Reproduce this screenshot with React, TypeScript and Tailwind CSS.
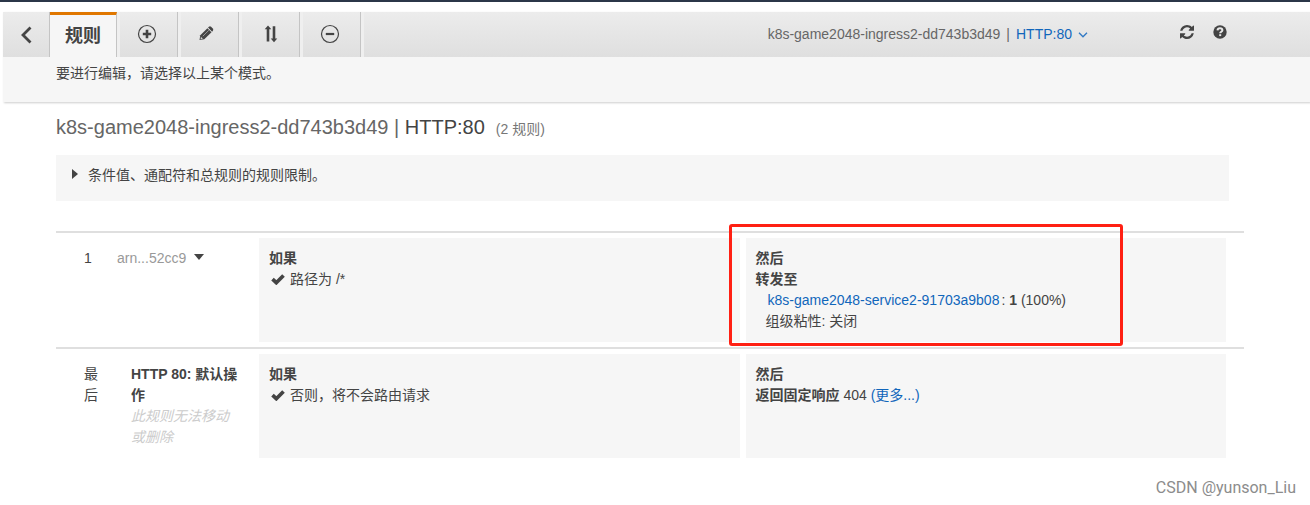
import type { ReactNode } from 'react'

const listener = 'k8s-game2048-ingress2-dd743b3d49'

function BackIcon() {
  return (
    <svg viewBox="0 0 12 18" className="h-[18px] w-3" fill="none" stroke="#444" strokeWidth="2.8">
      <path d="M10.5 1.5 3 9l7.500 7.500" />
    </svg>
  )
}

function PlusIcon() {
  return (
    <svg viewBox="0 0 20 20" className="size-5" fill="none" stroke="#444">
      <circle cx="10" cy="10" r="8.500" strokeWidth="1.200" />
      <path d="M10 5.800v8.400M5.800 10h8.400" strokeWidth="2.600" />
    </svg>
  )
}

function MinusIcon() {
  return (
    <svg viewBox="0 0 20 20" className="size-5" fill="none" stroke="#444">
      <circle cx="10" cy="10" r="8.500" strokeWidth="1.200" />
      <path d="M5.800 10h8.400" strokeWidth="2.200" />
    </svg>
  )
}

function PencilIcon() {
  return (
    <svg viewBox="0 0 20 20" className="size-5" fill="#444">
      <path d="M1.500 16 2.300 11.300 9.400 4.200l4.100 4.100-7.200 6.900z" />
      <path d="m10 3.600.9-.9q1.100-.9 2.200.1l1.700 1.600q1 1.100.1 2.300l-.8 1z" />
      <path d="m4.800 12.200 6-5.900" stroke="#999" strokeWidth="1" />
      <path d="m2.900 12.700 2 2-2.300.5z" fill="#d0d0d0" />
    </svg>
  )
}

function SortIcon() {
  return (
    <svg viewBox="0 0 20 20" className="size-5" fill="#444">
      <path d="m9 1.500 3.300 3.800h-2v12.200H7.700V5.300h-2z" />
      <path d="m15 18.200-3.300-3.800h2V2.200h2.600v12.200h2z" />
    </svg>
  )
}

function RefreshIcon() {
  return (
    <svg viewBox="0 0 1536 1536" className="size-3.5" fill="#444">
      <path
        transform="translate(0 -128)"
        d="M1511 1056q0 5-1 7-64 268-268 434.500t-478 166.500q-146 0-282.500-55t-243.500-157l-129 129q-19 19-45 19t-45-19-19-45v-448q0-26 19-45t45-19h448q26 0 45 19t19 45-19 45l-137 137q71 66 161 102t187 36q134 0 250-65t186-179q11-17 53-117 8-23 30-23h192q13 0 22.500 9.500t9.500 22.500zm25-800v448q0 26-19 45t-45 19h-448q-26 0-45-19t-19-45 19-45l138-138q-148-137-349-137-134 0-250 65t-186 179q-11 17-53 117-8 23-30 23h-199q-13 0-22.500-9.500t-9.500-22.500v-7q65-268 270-434.500t480-166.500q146 0 284 55.500t245 156.500l130-129q19-19 45-19t45 19 19 45z"
      />
    </svg>
  )
}

function HelpIcon() {
  return (
    <svg viewBox="0 0 14 14" className="size-3.5" fill="none">
      <circle cx="7" cy="7" r="6.700" fill="#444" />
      <path
        d="M4.500 5.400C4.600 3.900 5.600 3.200 7 3.200s2.400.8 2.400 2c0 1.600-2.200 1.500-2.200 3.100"
        stroke="#e8e8e8"
        strokeWidth="2"
      />
      <path d="M6.200 9.200h2v1.900h-2z" fill="#e8e8e8" />
    </svg>
  )
}

function CheckIcon() {
  return (
    <svg viewBox="0 0 14 12" className="mt-1 h-3 w-3.5 shrink-0" fill="none" stroke="#444">
      <path d="m1.500 6.200 3.800 3.500 7.200-7.200" strokeWidth="3.700" />
    </svg>
  )
}

interface TabButtonProps {
  label: string
  children: ReactNode
}

function TabButton({ label, children }: TabButtonProps) {
  return (
    <button
      aria-label={label}
      className="ml-[3px] flex w-[58px] items-center justify-center border-r border-[#c4c4c4] bg-linear-to-b from-[#ececec] to-[#dfdfdf] pr-1 pb-0.5"
    >
      {children}
    </button>
  )
}

interface RuleRowProps {
  order: string
  name: ReactNode
  condition: string
  highlighted?: boolean
  children: ReactNode
}

function RuleRow({ order, name, condition, highlighted, children }: RuleRowProps) {
  return (
    <li className="grid min-h-[116px] grid-cols-[197px_1fr_1fr] gap-x-1.5 border-t-2 border-[#dfdfdf] pt-[5px] pr-[18px] pb-[5px]">
      <div className="flex pt-2.5 pl-7">
        <div className="w-5 shrink-0">{order}</div>
        <div className="ml-[13px] flex-1">{name}</div>
      </div>
      <div className="bg-[#f6f6f6] px-2.5 pt-2.5">
        <p className="font-bold">如果</p>
        <p className="flex gap-[5px] pl-0.5">
          <CheckIcon />
          {condition}
        </p>
      </div>
      <div className="relative bg-[#f6f6f6] px-2.5 pt-2.5">
        <p className="font-bold">然后</p>
        {children}
        {highlighted && (
          <div className="pointer-events-none absolute -top-3.5 -left-[17px] h-[122px] w-[394px] rounded-[3px] border-3 border-[#ff2013]" />
        )}
      </div>
    </li>
  )
}

export default function App() {
  return (
    <div className="border-t-2 border-[#2b3648] bg-white font-['Liberation_Sans','Noto_Sans_CJK_SC',sans-serif] text-[14px] leading-[21px] text-[#444]">
      <header className="mt-2.5 ml-[3px] bg-[#f6f6f6] shadow-[1px_1px_2px_rgba(0,0,0,0.200)]">
        <div className="flex h-[45px] bg-linear-to-b from-[#ececec] to-[#dfdfdf]">
          <nav className="flex bg-[#efefef]">
            <button
              aria-label="返回"
              className="flex w-[47px] items-center justify-center border-r border-[#c4c4c4] bg-linear-to-b from-[#ececec] to-[#dfdfdf]"
            >
              <BackIcon />
            </button>
            <button className="w-[67px] border-t-3 border-r border-t-[#e07700] border-r-[#c4c4c4] bg-[#f6f6f6] text-[18px] font-bold">
              规则
            </button>
            <TabButton label="添加规则">
              <PlusIcon />
            </TabButton>
            <TabButton label="编辑规则">
              <PencilIcon />
            </TabButton>
            <TabButton label="重新排序规则">
              <SortIcon />
            </TabButton>
            <TabButton label="删除规则">
              <MinusIcon />
            </TabButton>
            <div className="w-[3px]" />
          </nav>
          <div className="ml-auto flex items-center gap-1.5 text-[#666]">
            <span>{listener}</span>
            <span>|</span>
            <button className="flex items-center gap-1.5 text-[#1166bb]">
              HTTP:80
              <svg viewBox="0 0 10 6" className="h-1.5 w-2.5" fill="none" stroke="#2f78c4">
                <path d="m1 .8 4 4 4-4" strokeWidth="1.300" />
              </svg>
            </button>
          </div>
          <div className="mr-[83px] ml-[92px] flex items-center gap-[19px] pb-1.5">
            <button aria-label="刷新">
              <RefreshIcon />
            </button>
            <button aria-label="帮助">
              <HelpIcon />
            </button>
          </div>
        </div>
        <p className="pt-1.5 pb-[18px] pl-[53px]">要进行编辑，请选择以上某个模式。</p>
      </header>

      <main className="mr-[66px] ml-14 pt-[11px]">
        <h1 className="flex items-baseline gap-[11px] text-[20px] leading-7">
          <span>
            <span className="text-[#666]">{listener} | </span>
            HTTP:80
          </span>
          <small className="text-[14px] text-[#777]">(2 规则)</small>
        </h1>

        <button className="mt-3 flex h-[46px] w-[calc(100%-15px)] gap-2.5 bg-[#f6f6f6] pt-2.5 pl-4 text-left">
          <svg viewBox="0 0 6 10" className="mt-1 h-2.5 w-1.5" fill="#444">
            <path d="M0 0 6 5 0 10z" />
          </svg>
          条件值、通配符和总规则的规则限制。
        </button>

        <ol className="mt-[30px]">
          <RuleRow
            order="1"
            name={
              <button className="flex items-center gap-2 text-[#999]">
                arn...52cc9
                <svg viewBox="0 0 10 6" className="mb-1 h-1.5 w-2.5" fill="#444">
                  <path d="M0 0h10L5 6z" />
                </svg>
              </button>
            }
            condition="路径为 /*"
            highlighted
          >
            <p className="font-bold">转发至</p>
            <p className="pl-3">
              <a href="#" className="mr-0.5 text-[#1166bb]">
                k8s-game2048-service2-91703a9b08
              </a>
              : <b>1</b> (100%)
            </p>
            <p className="pl-2.5">组级粘性: 关闭</p>
          </RuleRow>
          <RuleRow
            order="最后"
            name={
              <div className="pr-3 pl-3.5">
                <p className="font-bold">HTTP 80: 默认操作</p>
                <p className="text-[#ccc] italic">此规则无法移动或删除</p>
              </div>
            }
            condition="否则，将不会路由请求"
          >
            <p>
              <b>返回固定响应</b> 404{' '}
              <a href="#" className="text-[#1166bb]">
                (更多...)
              </a>
            </p>
          </RuleRow>
        </ol>
      </main>

      <footer className="pt-3.5 pr-3.5 text-right font-[Roboto,sans-serif] text-[16px] text-[#8c8c8c]">
        CSDN @yunson_Liu
      </footer>
    </div>
  )
}
